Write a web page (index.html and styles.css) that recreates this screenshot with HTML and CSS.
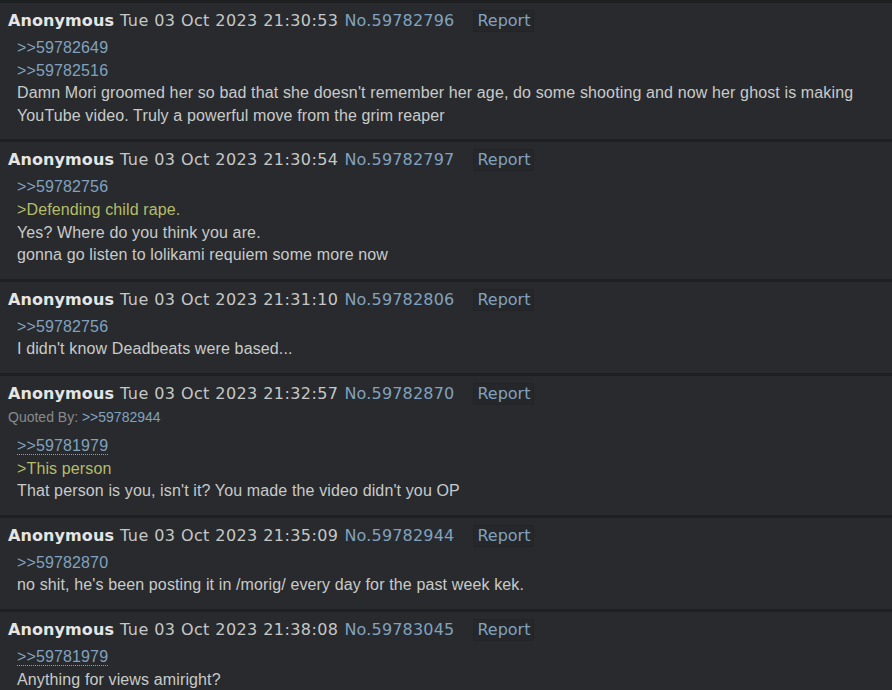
FILE: index.html
```html
<!DOCTYPE html>
<html lang="en">
<head>
<meta charset="utf-8">
<title>Thread</title>
<link rel="stylesheet" href="styles.css">
</head>
<body>
<main class="thread">
  <article class="post">
    <header class="post-head">
      <span class="name">Anonymous</span>
      <span class="date">Tue 03 Oct 2023 21:30:53</span>
      <a class="num" href="#p59782796">No.59782796</a>
      <button class="report">Report</button>
    </header>
    <div class="post-body">
      <a class="ql" href="#p59782649">&gt;&gt;59782649</a><br>
      <a class="ql" href="#p59782516">&gt;&gt;59782516</a><br>
      Damn Mori groomed her so bad that she doesn't remember her age, do some shooting and now her ghost is making YouTube video. Truly a powerful move from the grim reaper
    </div>
  </article>
  <article class="post">
    <header class="post-head">
      <span class="name">Anonymous</span>
      <span class="date">Tue 03 Oct 2023 21:30:54</span>
      <a class="num" href="#p59782797">No.59782797</a>
      <button class="report">Report</button>
    </header>
    <div class="post-body">
      <a class="ql" href="#p59782756">&gt;&gt;59782756</a><br>
      <span class="green">&gt;Defending child rape.</span><br>
      Yes? Where do you think you are.<br>
      gonna go listen to lolikami requiem some more now
    </div>
  </article>
  <article class="post">
    <header class="post-head">
      <span class="name">Anonymous</span>
      <span class="date">Tue 03 Oct 2023 21:31:10</span>
      <a class="num" href="#p59782806">No.59782806</a>
      <button class="report">Report</button>
    </header>
    <div class="post-body">
      <a class="ql" href="#p59782756">&gt;&gt;59782756</a><br>
      I didn't know Deadbeats were based...
    </div>
  </article>
  <article class="post">
    <header class="post-head">
      <span class="name">Anonymous</span>
      <span class="date">Tue 03 Oct 2023 21:32:57</span>
      <a class="num" href="#p59782870">No.59782870</a>
      <button class="report">Report</button>
    </header>
    <div class="quoted-by">Quoted By: <a class="ql" href="#p59782944">&gt;&gt;59782944</a></div>
    <div class="post-body">
      <a class="ql ql-op" href="#p59781979">&gt;&gt;59781979</a><br>
      <span class="green">&gt;This person</span><br>
      That person is you, isn't it? You made the video didn't you OP
    </div>
  </article>
  <article class="post">
    <header class="post-head">
      <span class="name">Anonymous</span>
      <span class="date">Tue 03 Oct 2023 21:35:09</span>
      <a class="num" href="#p59782944">No.59782944</a>
      <button class="report">Report</button>
    </header>
    <div class="post-body">
      <a class="ql" href="#p59782870">&gt;&gt;59782870</a><br>
      no shit, he's been posting it in /morig/ every day for the past week kek.
    </div>
  </article>
  <article class="post">
    <header class="post-head">
      <span class="name">Anonymous</span>
      <span class="date">Tue 03 Oct 2023 21:38:08</span>
      <a class="num" href="#p59783045">No.59783045</a>
      <button class="report">Report</button>
    </header>
    <div class="post-body">
      <a class="ql ql-op" href="#p59781979">&gt;&gt;59781979</a><br>
      Anything for views amiright?
    </div>
  </article>
</main>
</body>
</html>
```

FILE: styles.css
```css
html, body {
  margin: 0;
  padding: 0;
  background: #1d1f21;
}

.thread {
  display: flex;
  flex-direction: column;
  gap: 3px;
  padding-top: 3px;
}

.post {
  background: #282a2e;
  padding: 7px 16px 12px 8px;
}

.post-head {
  display: flex;
  align-items: center;
  height: 22px;
  font-family: "DejaVu Sans", Verdana, sans-serif;
  font-size: 16px;
  line-height: 22px;
  white-space: nowrap;
}

.name {
  color: #e4e5e4;
  font-weight: bold;
  letter-spacing: 0.1px;
}

.date {
  color: #c5c8c6;
  margin-left: 6px;
  letter-spacing: 0.42px;
}

.num {
  color: #81a2be;
  text-decoration: none;
  margin-left: 6px;
  letter-spacing: 0.18px;
}

.report {
  margin-left: 19px;
  height: 22px;
  padding: 0 3px;
  background: #25272b;
  border: 1px solid #222427;
  color: #81a2be;
  font-family: "DejaVu Sans", Verdana, sans-serif;
  font-size: 16px;
  line-height: 20px;
}

.quoted-by {
  font-family: "Liberation Sans", Arial, sans-serif;
  font-size: 14px;
  line-height: 25px;
  color: #888a8c;
}

.post-body {
  margin-top: 5px;
  padding-left: 9px;
  font-family: "Liberation Sans", Arial, sans-serif;
  font-size: 16px;
  line-height: 22.6px;
  letter-spacing: 0.13px;
  color: #c8cac9;
}

.ql {
  color: #81a2be;
  text-decoration: none;
}

.ql-op {
  border-bottom: 1px dotted #81a2be;
}

.green {
  color: #b5bd68;
}
```
